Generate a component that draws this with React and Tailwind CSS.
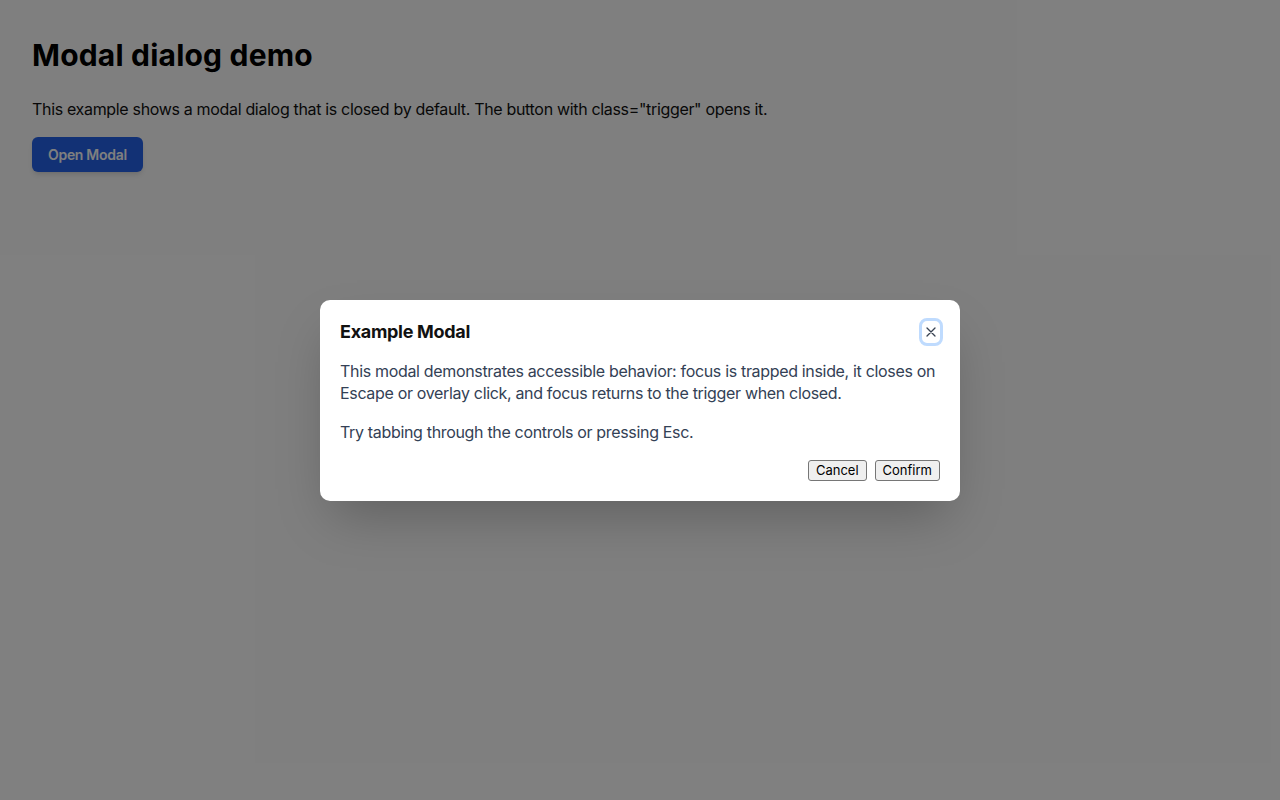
export default function App() {
  const font = { fontFamily: 'Inter, "Noto Sans", sans-serif' };
  return (
    <div className="relative min-h-[800px] w-full bg-white text-[#111]" style={font}>
      <div className="px-8 pt-[37px]">
        <h1 className="text-[30px] leading-[36px] font-bold tracking-[0.2px] text-black">Modal dialog demo</h1>
        <p className="mt-[24px] text-[16px] leading-[24px] tracking-[-0.33px] text-[#111]">
          This example shows a modal dialog that is closed by default. The button with class="trigger" opens it.
        </p>
        <button className="mt-[16px] h-[35px] px-4 rounded-md bg-[#2563eb] text-white text-[14px] font-semibold tracking-[-0.3px] shadow-md">
          Open Modal
        </button>
      </div>

      <div className="absolute inset-0 bg-[#000000]/50 flex items-center justify-center">
        <div className="w-[640px] bg-white rounded-[10px] px-5 pt-[21px] pb-5 shadow-2xl">
          <div className="flex items-center justify-between mb-[17px] h-[22px]">
            <h2 className="text-[18px] leading-[22px] font-bold tracking-[-0.3px] text-[#111]">Example Modal</h2>
            <button className="w-[18px] h-[22px] flex items-center justify-center rounded-[5px] outline-[3px] outline-solid outline-[#bfdbfe] bg-white">
              <svg width="10" height="10" viewBox="0 0 10 10">
                <path d="M1 1 L9 9 M9 1 L1 9" stroke="#374151" strokeWidth="1.3" strokeLinecap="round" />
              </svg>
            </button>
          </div>
          <p className="text-[16px] leading-[22px] tracking-[-0.33px] text-[#334155] mb-[17px]">
            This modal demonstrates accessible behavior: focus is trapped inside, it closes on Escape or overlay click, and focus returns to the trigger when closed.
          </p>
          <p className="text-[16px] leading-[22px] tracking-[-0.33px] text-[#334155] mb-[17px]">
            Try tabbing through the controls or pressing Esc.
          </p>
          <div className="flex justify-end gap-2">
            <button className="h-[21px] px-[7px] bg-[#efefef] border border-[#767676] rounded-[3px] text-[13px] leading-[19px] text-black">
              Cancel
            </button>
            <button className="h-[21px] px-[7px] bg-[#efefef] border border-[#767676] rounded-[3px] text-[13px] leading-[19px] text-black">
              Confirm
            </button>
          </div>
        </div>
      </div>
    </div>
  );
}
